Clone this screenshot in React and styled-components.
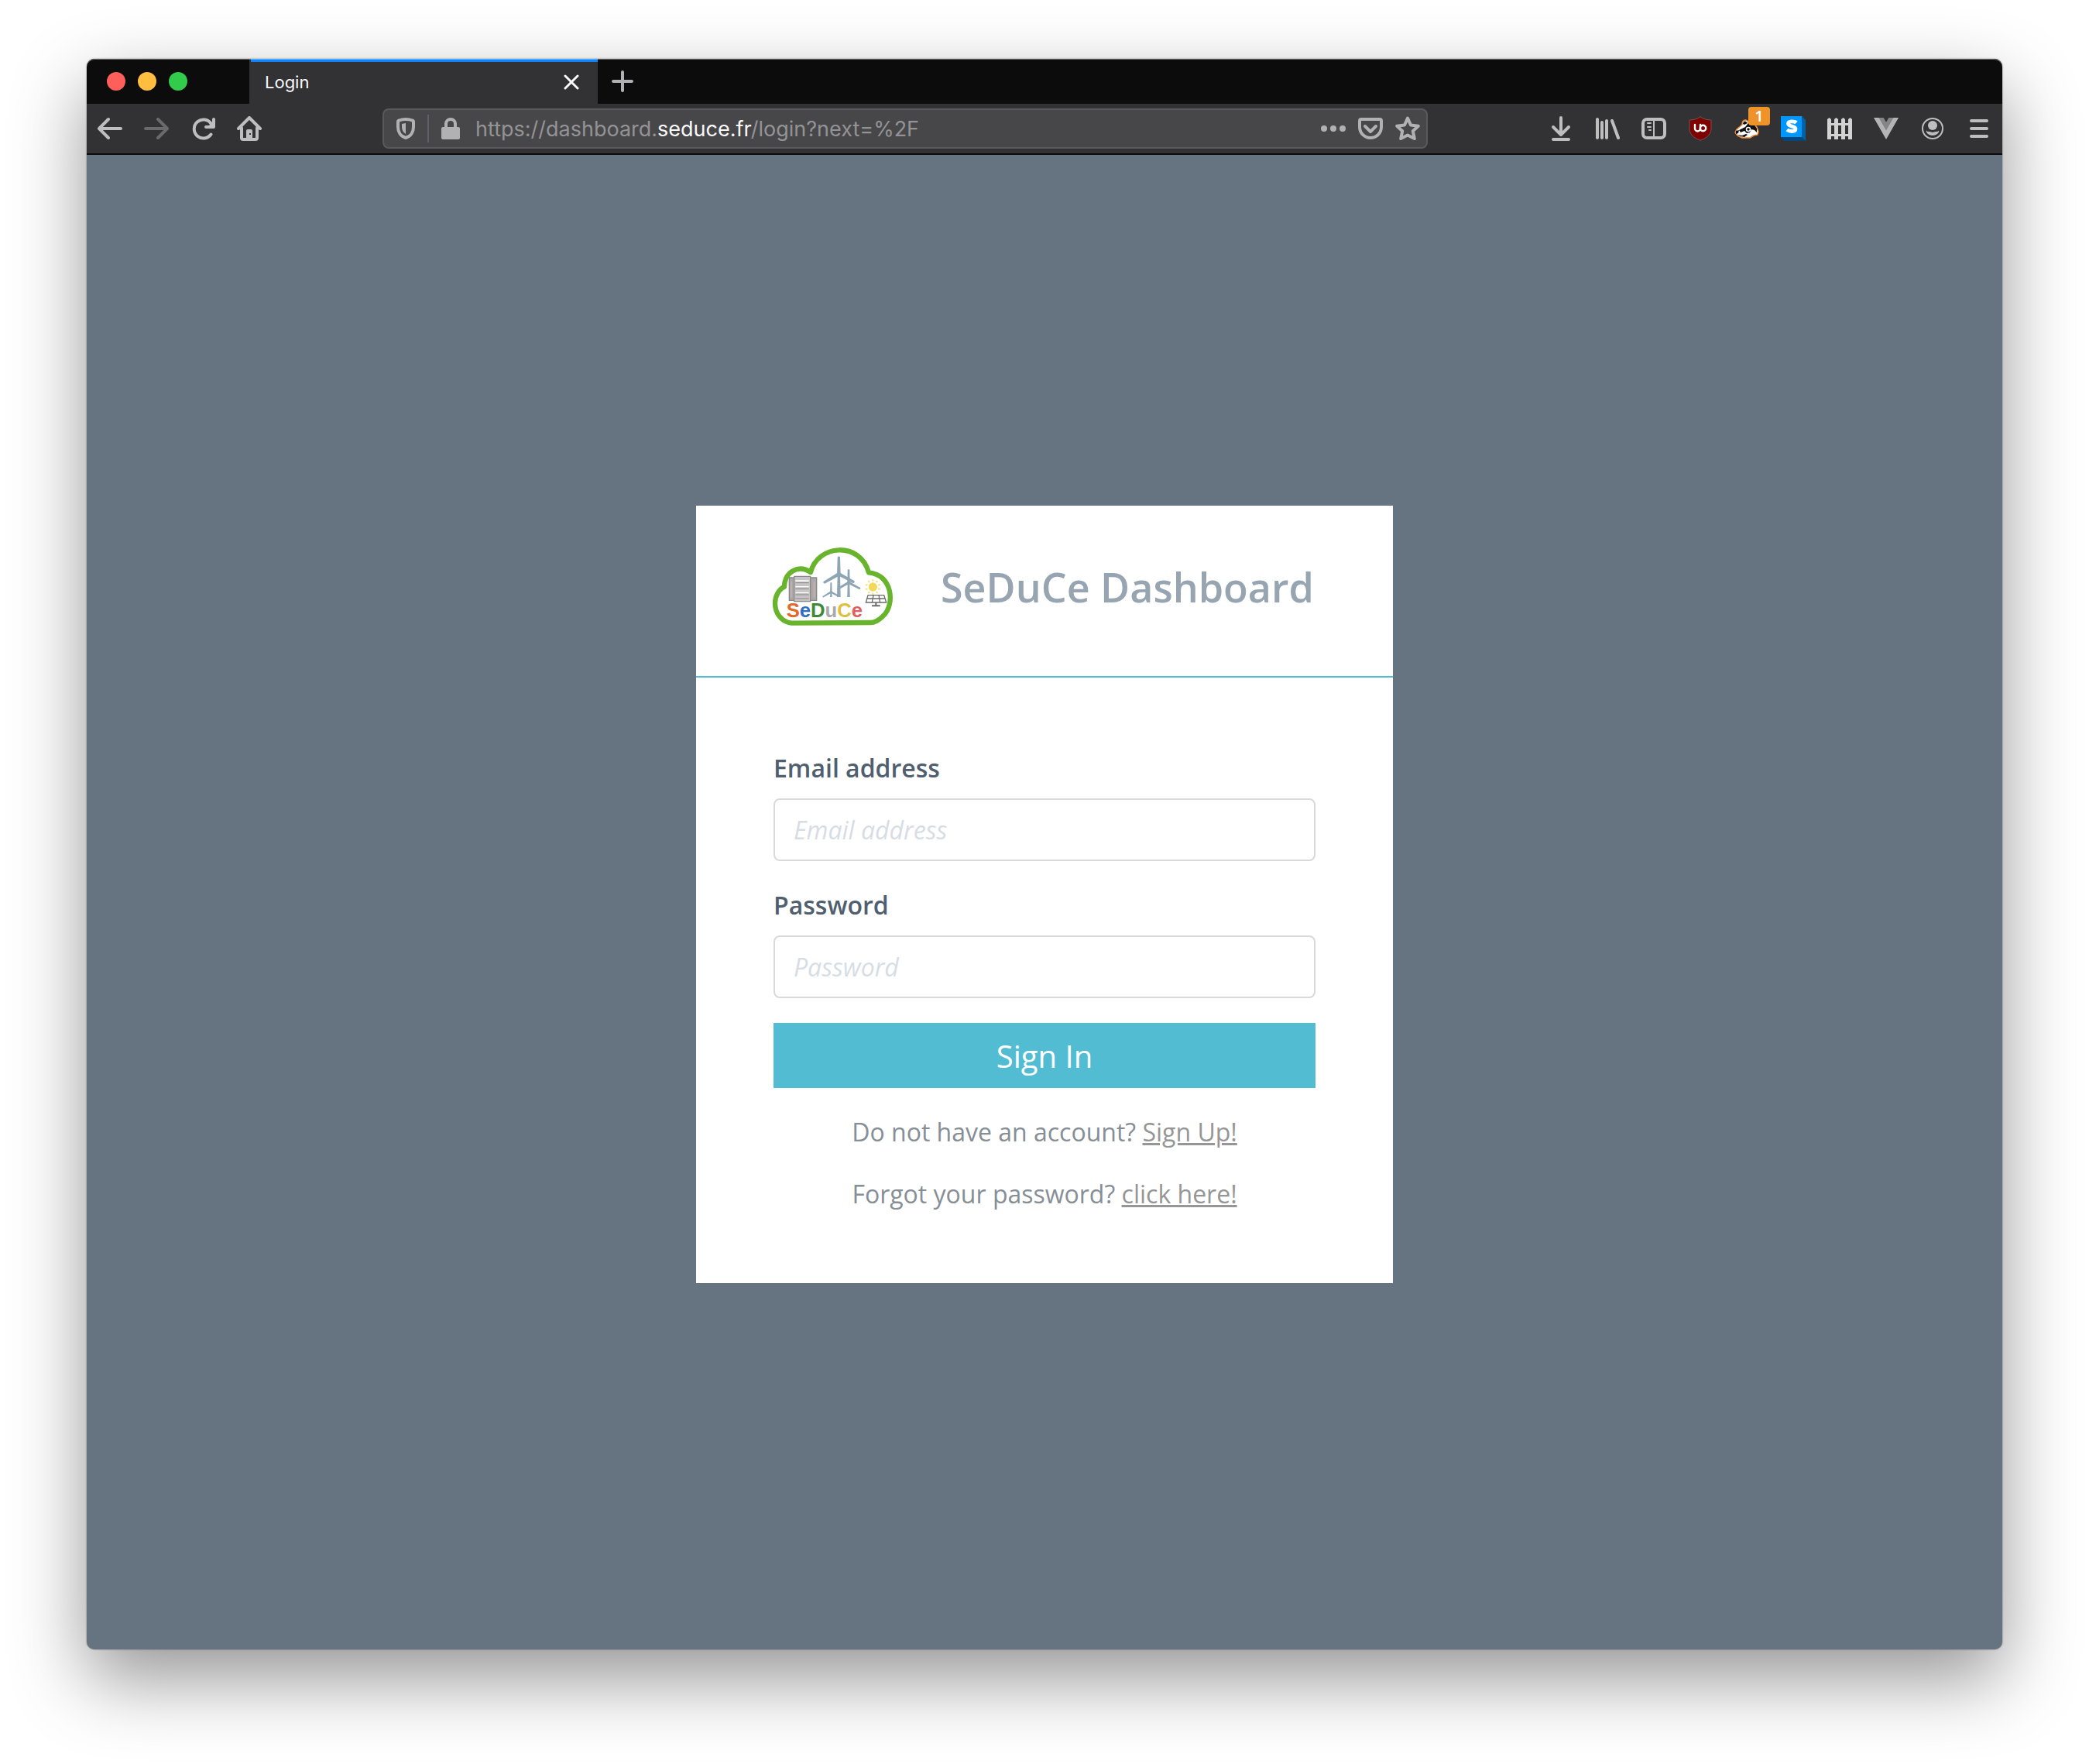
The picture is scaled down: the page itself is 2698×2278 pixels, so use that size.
import React from "react";
import styled, { createGlobalStyle } from "styled-components";

const GlobalStyle = createGlobalStyle`
  *, *::before, *::after { box-sizing: border-box; }
  body {
    margin: 0;
    background: #fff;
    font-family: "Open Sans", "Noto Sans", sans-serif;
    font-size: 32px;
    line-height: 50px;
    color: #4f5f6f;
  }
  button { font: inherit; color: inherit; cursor: pointer; }
`;

const Desktop = styled.div`
  min-height: 100vh;
  display: flex;
  padding: 76px 112px 148px;
`;

const BrowserWindow = styled.div`
  flex: 1;
  display: flex;
  flex-direction: column;
  border-radius: 10px;
  overflow: hidden;
  position: relative;
  background: #667380;
  box-shadow: 0 0 2px rgba(0, 0, 0, 0.5), 0 38px 96px rgba(0, 0, 0, 0.42);

  &::after {
    content: "";
    position: absolute;
    inset: 0;
    border-radius: 10px;
    box-shadow: inset 0 1px 0 rgba(255, 255, 255, 0.4);
    pointer-events: none;
  }
`;

const TabStrip = styled.div`
  display: flex;
  height: 58px;
  background: #0c0c0d;
  font-family: Inter, "Liberation Sans", sans-serif;
`;

const WindowControls = styled.div`
  display: flex;
  align-items: center;
  gap: 16px;
  width: 210px;
  padding-left: 26px;
`;

const ControlDot = styled.button`
  width: 24px;
  height: 24px;
  padding: 0;
  border: 0;
  border-radius: 50%;
  background: ${(p) => p.$color};
`;

const Tab = styled.div`
  display: flex;
  align-items: center;
  justify-content: space-between;
  width: 450px;
  padding: 2px 16px 0 18px;
  border-left: 2px solid #323234;
  background: linear-gradient(#0a84ff 4px, #323234 4px);
  color: #f9f9fa;
  font-size: 22px;
`;

const TabButton = styled.button`
  display: grid;
  place-items: center;
  width: ${(p) => p.$width}px;
  height: 100%;
  padding: 0;
  border: 0;
  background: none;
`;

const Toolbar = styled.div`
  display: flex;
  align-items: center;
  height: 66px;
  background: #323234;
  border-bottom: 2px solid #0c0c0d;
  font-family: Inter, "Liberation Sans", sans-serif;
`;

const ToolButton = styled.button`
  display: grid;
  place-items: center;
  position: relative;
  flex: none;
  width: ${(p) => (p.$compact ? 48 : 60)}px;
  height: 48px;
  padding: 0;
  border: 0;
  background: none;
  opacity: ${(p) => (p.disabled ? 0.4 : 1)};
`;

const Badge = styled.span`
  position: absolute;
  top: -4px;
  right: 0;
  width: 28px;
  height: 24px;
  border-radius: 4px;
  background: #ed9329;
  color: #fff;
  font-family: "Open Sans", sans-serif;
  font-size: 20px;
  font-weight: 600;
  line-height: 24px;
  text-align: center;
`;

const AddressBar = styled.div`
  flex: 1;
  display: flex;
  align-items: center;
  min-width: 0;
  height: 52px;
  margin: 0 142px;
  padding-left: 4px;
  border: 2px solid #59595b;
  border-radius: 8px;
  background: #474749;
`;

const Divider = styled.span`
  width: 2px;
  height: 36px;
  margin: 0 4px;
  background: #5e616b;
`;

const Address = styled.div`
  flex: 1;
  min-width: 0;
  overflow: hidden;
  white-space: nowrap;
  padding: 2px 0 0 8px;
  color: #939395;
  font-size: 27px;
  line-height: 46px;
  outline: 0;
`;

const Host = styled.span`
  color: #f9f9fa;
`;

const Page = styled.main`
  flex: 1;
  display: grid;
  place-items: center;
  padding-bottom: 20px;
`;

const Card = styled.section`
  width: 900px;
  max-width: 100%;
  background: #fff;
`;

const CardHeader = styled.header`
  display: flex;
  align-items: center;
  gap: 60px;
  padding: 53px 100px 63px;
  border-bottom: 2px solid #52bcd3;
`;

const Title = styled.h1`
  margin: 0;
  color: #97a4b1;
  font-size: 52px;
  font-weight: 600;
  line-height: 60px;
  white-space: nowrap;
`;

const LoginForm = styled.form`
  display: flex;
  flex-direction: column;
  gap: 32px;
  padding: 92px 100px 90px;
`;

const Field = styled.div`
  display: flex;
  flex-direction: column;
  gap: 14px;
`;

const Label = styled.label`
  font-weight: 600;
`;

const TextInput = styled.input`
  width: 100%;
  height: 81px;
  padding: 0 24px;
  border: 2px solid #d9d9d9;
  border-radius: 8px;
  background: #fff;
  color: inherit;
  font: inherit;

  &::placeholder {
    color: #d7dde4;
    font-style: italic;
    opacity: 1;
  }
`;

const SubmitButton = styled.button`
  height: 84px;
  padding: 2px 0 0;
  border: 0;
  background: #52bcd3;
  color: #fff;
  font-size: 40px;
`;

const Hints = styled.div`
  display: flex;
  flex-direction: column;
  gap: 30px;
`;

const Hint = styled.p`
  margin: 0;
  color: #868e96;
  text-align: center;
`;

const HintLink = styled.a`
  color: #969696;
  text-decoration: underline;
`;

function Icon({ width = 32, height = 32, children }) {
  return (
    <svg
      width={width}
      height={height}
      viewBox={`0 0 ${width} ${height}`}
      fill="none"
      stroke="#bebebf"
      strokeWidth="4"
      strokeLinecap="round"
      strokeLinejoin="round"
      aria-hidden="true"
    >
      {children}
    </svg>
  );
}

const BackIcon = () => (
  <Icon>
    <path d="M30 16H3M14 4L2 16l12 12" />
  </Icon>
);

const ForwardIcon = () => (
  <Icon>
    <path d="M2 16h27M18 4l12 12-12 12" />
  </Icon>
);

const ReloadIcon = () => (
  <Icon>
    <path d="M26.5 23.5A12 12 0 1 1 26.5 9.5" />
    <path d="M30 4v10H20" />
    <path d="M30 6v8h-8z" fill="#bebebf" stroke="none" />
  </Icon>
);

const HomeIcon = () => (
  <Icon>
    <path d="M2 16L16 2l14 14" />
    <path d="M6 15v13q0 2 2 2h16q2 0 2-2V15" />
    <path d="M14 17h4q2 0 2 2v11h-8V19q0-2 2-2z" fill="#bebebf" stroke="none" />
    <path d="M16 22h2v2h-2z" fill="#323234" stroke="none" />
  </Icon>
);

const ShieldIcon = () => (
  <Icon width={24} height={28}>
    <g stroke="#b1b1b3">
      <path d="M12 2c3 0 6 .5 8.500 1.500q1.500.5 1.500 2V12c0 6-3 12-10 14C5 24 2 18 2 12V5.500q0-1.500 1.500-2C6 2.500 9 2 12 2z" />
      <path d="M12 7v14C8.500 19 7 15.500 7 12V8z" fill="#b1b1b3" stroke="none" />
    </g>
  </Icon>
);

const LockIcon = () => (
  <Icon width={24} height={28}>
    <rect x="0" y="12" width="24" height="16" rx="2" fill="#b1b1b3" stroke="none" />
    <path d="M6 13V8a6 6 0 0 1 12 0v5" stroke="#b1b1b3" />
  </Icon>
);

const DotsIcon = () => (
  <Icon>
    <g fill="#b1b1b3" stroke="none">
      <circle cx="4" cy="16" r="4" />
      <circle cx="16" cy="16" r="4" />
      <circle cx="28" cy="16" r="4" />
    </g>
  </Icon>
);

const PocketIcon = () => (
  <Icon>
    <g stroke="#b1b1b3">
      <path d="M4 4h24q2 0 2 2v8a14 14 0 0 1-28 0V6q0-2 2-2z" />
      <path d="M9 13l7 7 7-7" />
    </g>
  </Icon>
);

const StarIcon = () => (
  <Icon>
    <path
      d="M16 2.500l4 9 9.800 1.200-7 6.600 2 9.700L16 24.500 7.200 29l2-9.700-7-6.600 9.800-1.200z"
      stroke="#b1b1b3"
      strokeWidth="4"
    />
  </Icon>
);

const DownloadIcon = () => (
  <Icon>
    <path d="M16 2v22M6 14l10 10 10-10M6 30h20" />
  </Icon>
);

const LibraryIcon = () => (
  <Icon>
    <path d="M3 4v24M9 8v20M15 6v22M22 6l8 22" />
  </Icon>
);

const SidebarIcon = () => (
  <Icon>
    <rect x="2" y="4" width="28" height="24" rx="5" />
    <path d="M16 5v22M8 9h4M8 14h4M10 18h2" strokeWidth="2" />
  </Icon>
);

const UblockIcon = () => (
  <Icon>
    <path
      d="M16 .8c4 3 8 4 14 4.200V16c0 7-5 12-14 15.300C7 28 2 23 2 16V5c6-.2 10-1.200 14-4.200z"
      fill="#800000"
      stroke="#6d5557"
      strokeWidth="1"
    />
    <g stroke="#fff" strokeWidth="2.400">
      <path d="M9 11v5a3.500 3.500 0 0 0 7 0v-5" />
      <circle cx="19.500" cy="15.500" r="3.700" />
    </g>
  </Icon>
);

const BadgerIcon = () => (
  <Icon>
    <path
      d="M1 21l2-4 7-6q0-6 4-6 3 0 4 3l6 1 5 5 2 6-1 4-5 1-5 3-10 0-6-3z"
      fill="#fff"
      stroke="#ec8a32"
      strokeWidth="1.500"
    />
    <path d="M2 19l4-1-1 4-3 1z" fill="#111" stroke="none" />
    <path d="M6 18l8-4 4-5 7 1 4 6 0 5-3-3-4-1-2 4-4 1-3-3-5 2z" fill="#111" stroke="none" />
    <path d="M11 10q1-5 4-3l2 2-4 2z" fill="#111" stroke="none" />
    <path d="M4 24l6 1 5-2 2 1-4 3-5-1z" fill="#111" stroke="none" />
    <circle cx="18" cy="17" r="2.500" fill="#111" stroke="#fff" strokeWidth="1.500" />
  </Icon>
);

const StylusIcon = () => (
  <Icon>
    <path d="M27 0l5 5v27l-5-5z" fill="#0063a6" stroke="none" />
    <path d="M0 27h27l5 5H5z" fill="#00487c" stroke="none" />
    <path d="M0 0h27v27H0z" fill="#0097ff" stroke="none" />
    <path d="M20 8.500C18 6.500 9.500 5.500 9.500 9.800c0 4 9.500 2.700 9.500 6.700 0 4.200-8 3.500-11 1" stroke="#fff" strokeWidth="4.800" strokeLinecap="butt" />
  </Icon>
);

const FenceIcon = () => (
  <Icon>
    <g fill="#d2d2d3" stroke="none">
      {[0, 9, 18, 27].map((x) => (
        <path key={x} d={`M${x} 30V4L${x + 2.5} 2L${x + 5} 4v26z`} />
      ))}
      <path d="M0 9h32v3H0zM0 23h32v3H0z" />
    </g>
  </Icon>
);

const VueIcon = () => (
  <Icon>
    <path d="M0 2h32L16 30z" fill="#b4b4b5" stroke="none" />
    <path d="M6.500 2h6L16 8l3.500-6h6L16 18.500z" fill="#858587" stroke="none" />
    <path d="M12.500 2h7L16 8z" fill="#323234" stroke="none" />
  </Icon>
);

const AccountIcon = () => (
  <Icon>
    <circle cx="16" cy="16" r="13" strokeWidth="2" />
    <circle cx="16" cy="12" r="6" fill="#bebebf" stroke="none" />
    <path d="M8 18.500q1 1.800 4 1.500l4 1 4-1q3 .3 4-1.500c1.200 2-2.500 6.500-8 6.500s-9.200-4.500-8-6.500z" fill="#bebebf" stroke="none" />
  </Icon>
);

const MenuIcon = () => (
  <Icon>
    <path d="M6 6h20M6 16h20M6 26h20" />
  </Icon>
);

function Turbine({ x, y, scale, base }) {
  return (
    <g>
      <path d={`M${x - 5 * scale} ${y}L${x - 7 * scale} ${base}H${x + 7 * scale}L${x + 5 * scale} ${y}z`} />
      <g transform={`translate(${x} ${y}) scale(${scale})`}>
        {[0, 118, 240].map((angle) => (
          <path key={angle} transform={`rotate(${angle})`} d="M-7 5L-5-66 0-69 5-66 7 5z" />
        ))}
      </g>
    </g>
  );
}

function SeduceLogo() {
  return (
    <svg width="156" height="104" viewBox="57 48 468 312" overflow="visible" role="img" aria-label="SeDuCe">
      <path
        d="M128 344C86 340 63 304 63 266c0-28 15-52 36-63 0-56 54-88 102-56C226 40 392 24 426 148c92 8 104 124 55 169-16 16-31 25-49 25z"
        fill="#fff"
        stroke="#69b42d"
        strokeWidth="19"
        strokeLinejoin="round"
      />
      <g stroke="#8a8888" strokeWidth="4">
        <path d="M118 168h106v88H118z" fill="#aaa8a8" />
        <path d="M137 163h63v97h-63z" fill="#c6c4c4" />
        <path d="M142 180h52M142 203h52M142 226h52" stroke="#fff" />
        <path d="M142 188h52M142 211h52M142 234h52M142 249h52" strokeWidth="3" />
        <path d="M126 184v60M214 184v60" stroke="#d4b9b7" strokeWidth="3" />
      </g>
      <g fill="#8ea5b4">
        <Turbine x={310} y={154} scale={1} base={243} />
        <Turbine x={348} y={187} scale={0.75} base={243} />
        <Turbine x={280} y={224} scale={0.55} base={243} />
      </g>
      <g stroke="#f3dd67" strokeWidth="5" strokeLinecap="round">
        <circle cx="442" cy="204" r="17" fill="#f2d95c" stroke="none" />
        {[0, 36, 72, 108, 144, 180, 216, 252, 288, 324].map((angle) => (
          <path key={angle} transform={`rotate(${angle} 442 204)`} d="M442 180v-4" />
        ))}
      </g>
      <g stroke="#6b6b6b" strokeWidth="4" fill="none">
        <path d="M423 236h62l9 28h-79zM419 249h71M444 236l-5 28M465 236l5 28" />
        <path d="M454 264v12M438 277h32" strokeWidth="6" />
      </g>
      <text x="107" y="322" fontFamily="Liberation Sans, Arial, sans-serif" fontSize="77" fontWeight="700">
        <tspan fill="#e2692b">S</tspan>
        <tspan fill="#2f6fc4">e</tspan>
        <tspan fill="#3f8a3a">D</tspan>
        <tspan fill="#a9a9ab">u</tspan>
        <tspan fill="#dfc03f">C</tspan>
        <tspan fill="#e0605f">e</tspan>
      </text>
    </svg>
  );
}

const NAV_TOOLS = [
  { label: "Back", Glyph: BackIcon },
  { label: "Forward", Glyph: ForwardIcon, disabled: true },
  { label: "Reload", Glyph: ReloadIcon },
  { label: "Home", Glyph: HomeIcon },
];

const PAGE_ACTIONS = [
  { label: "Page actions", Glyph: DotsIcon },
  { label: "Save to Pocket", Glyph: PocketIcon },
  { label: "Bookmark this page", Glyph: StarIcon },
];

const EXTENSIONS = [
  { label: "Downloads", Glyph: DownloadIcon },
  { label: "Library", Glyph: LibraryIcon },
  { label: "Sidebars", Glyph: SidebarIcon },
  { label: "uBlock Origin", Glyph: UblockIcon },
  { label: "Privacy Badger", Glyph: BadgerIcon, badge: "1" },
  { label: "Stylus", Glyph: StylusIcon },
  { label: "Containers", Glyph: FenceIcon },
  { label: "Vue devtools", Glyph: VueIcon },
  { label: "Account", Glyph: AccountIcon },
  { label: "Menu", Glyph: MenuIcon },
];

function Tools({ items, compact }) {
  return items.map(({ label, Glyph, badge, disabled }) => (
    <ToolButton key={label} type="button" aria-label={label} disabled={disabled} $compact={compact}>
      <Glyph />
      {badge && <Badge>{badge}</Badge>}
    </ToolButton>
  ));
}

export default function App() {
  return (
    <>
      <GlobalStyle />
      <Desktop>
        <BrowserWindow>
          <TabStrip>
            <WindowControls>
              <ControlDot type="button" aria-label="Close window" $color="#ff5f5b" />
              <ControlDot type="button" aria-label="Minimize window" $color="#ffbe40" />
              <ControlDot type="button" aria-label="Zoom window" $color="#33cb4b" />
            </WindowControls>
            <Tab>
              Login
              <TabButton type="button" aria-label="Close tab" $width={36}>
                <Icon width={20} height={20}>
                  <path d="M2 2l16 16M18 2L2 18" stroke="#f9f9fa" strokeWidth="3" />
                </Icon>
              </TabButton>
            </Tab>
            <TabButton type="button" aria-label="New tab" $width={64}>
              <Icon width={28} height={28}>
                <path d="M14 2v24M2 14h24" stroke="#b1b1b3" />
              </Icon>
            </TabButton>
          </TabStrip>
          <Toolbar>
            <Tools items={NAV_TOOLS} />
            <AddressBar>
              <ToolButton type="button" aria-label="Tracking protection" $compact>
                <ShieldIcon />
              </ToolButton>
              <Divider />
              <ToolButton type="button" aria-label="Site information" $compact>
                <LockIcon />
              </ToolButton>
              <Address role="textbox" aria-label="Address" tabIndex={0}>
                https://dashboard.<Host>seduce.fr</Host>/login?next=%2F
              </Address>
              <Tools items={PAGE_ACTIONS} compact />
            </AddressBar>
            <Tools items={EXTENSIONS} />
          </Toolbar>
          <Page>
            <Card>
              <CardHeader>
                <SeduceLogo />
                <Title>SeDuCe Dashboard</Title>
              </CardHeader>
              <LoginForm onSubmit={(event) => event.preventDefault()}>
                <Field>
                  <Label htmlFor="email">Email address</Label>
                  <TextInput id="email" type="email" placeholder="Email address" />
                </Field>
                <Field>
                  <Label htmlFor="password">Password</Label>
                  <TextInput id="password" type="password" placeholder="Password" />
                </Field>
                <SubmitButton type="submit">Sign In</SubmitButton>
                <Hints>
                  <Hint>
                    Do not have an account? <HintLink href="#signup">Sign Up!</HintLink>
                  </Hint>
                  <Hint>
                    Forgot your password? <HintLink href="#reset">click here!</HintLink>
                  </Hint>
                </Hints>
              </LoginForm>
            </Card>
          </Page>
        </BrowserWindow>
      </Desktop>
    </>
  );
}
